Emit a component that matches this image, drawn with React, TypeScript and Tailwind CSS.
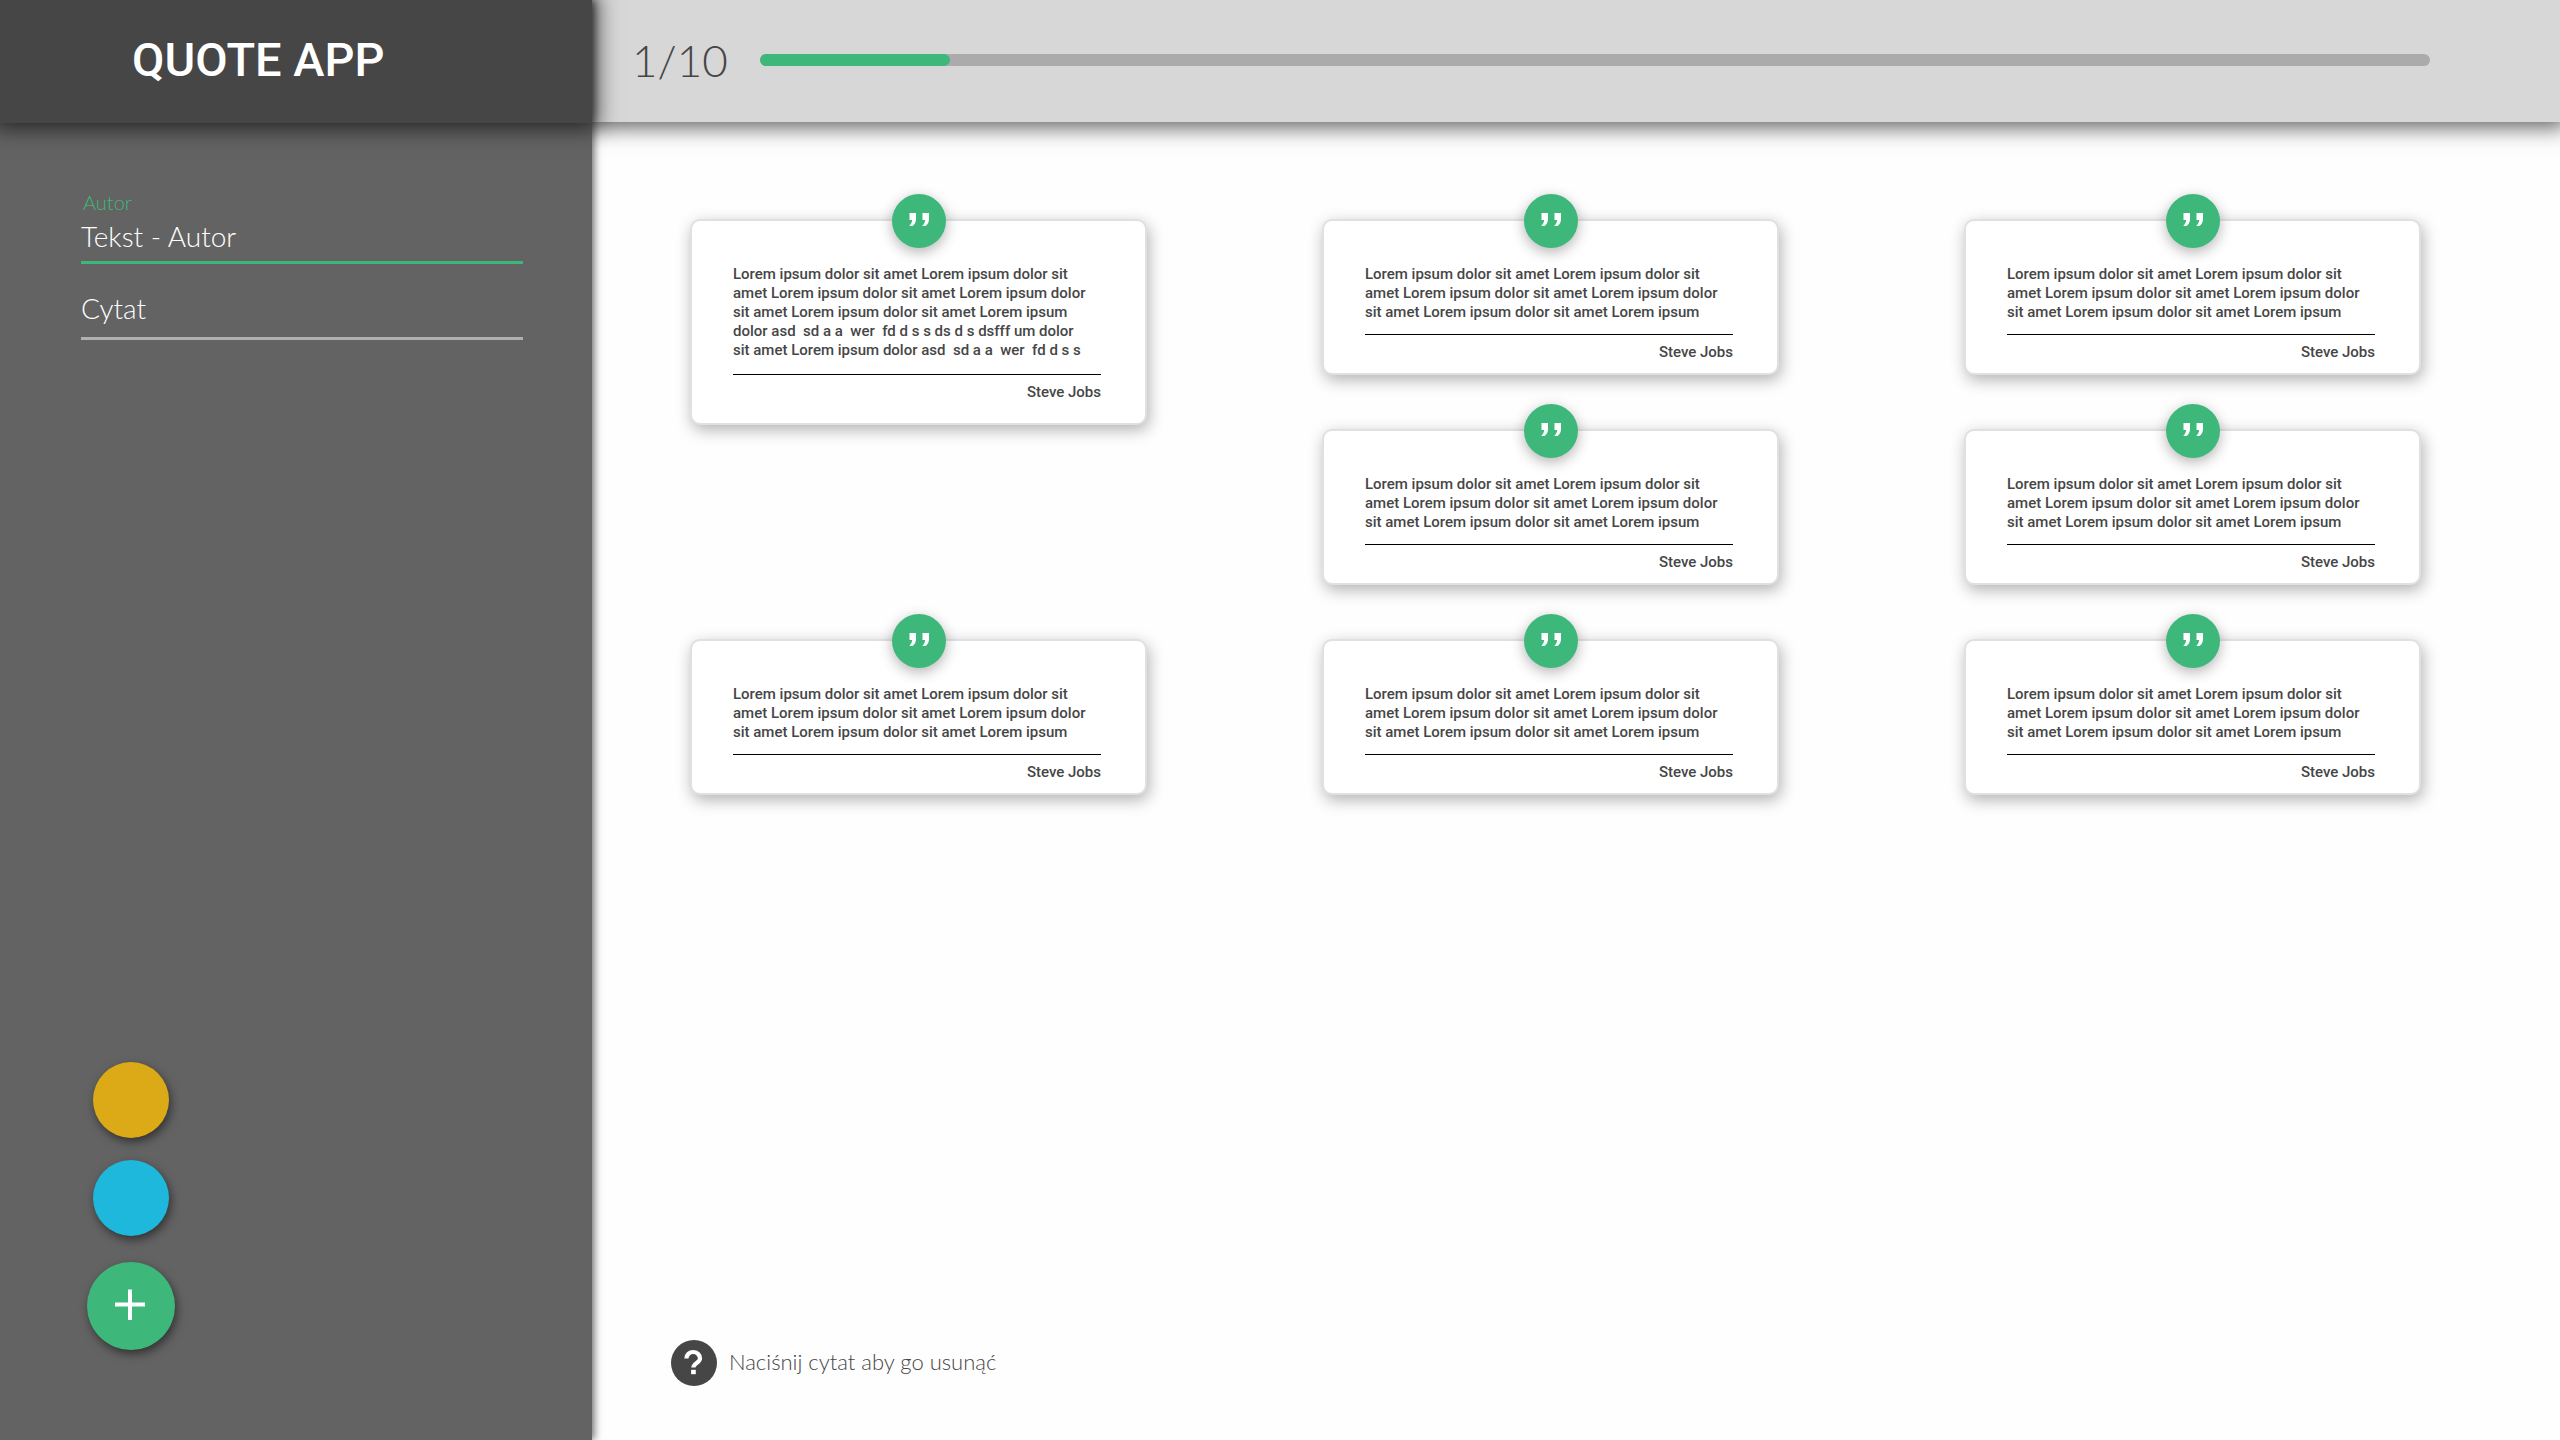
import { useState } from "react";

type Quote = { id: number; lines: string[]; author: string; tall?: boolean };

const SHORT_LINES = [
  "Lorem ipsum dolor sit amet Lorem ipsum dolor sit",
  "amet Lorem ipsum dolor sit amet Lorem ipsum dolor",
  "sit amet Lorem ipsum dolor sit amet Lorem ipsum",
];

const LONG_LINES = [
  ...SHORT_LINES,
  "dolor asd  sd a a  wer  fd d s s ds d s dsfff um dolor",
  "sit amet Lorem ipsum dolor asd  sd a a  wer  fd d s s",
];

const INITIAL_QUOTES: Quote[] = Array.from({ length: 8 }, (_, id) => ({
  id,
  lines: id === 0 ? LONG_LINES : SHORT_LINES,
  author: "Steve Jobs",
  tall: id === 0,
}));

function QuoteMark() {
  return (
    <span className="absolute left-1/2 -top-[27px] size-[54px] -translate-x-1/2 rounded-full bg-[#3db87a] shadow-[0_4px_14px_rgba(0,0,0,0.3)]">
      <svg viewBox="0 0 54 54" className="size-full fill-white" aria-hidden="true">
        <path d="M17.5 19h6.5v6.5c0 2.5-1.5 5-3.5 6.5h-3.3c1.6-1.6 2.8-3.6 3-6h-2.7z" />
        <path d="M30.5 19h6.5v6.5c0 2.5-1.5 5-3.5 6.5h-3.3c1.6-1.6 2.8-3.6 3-6h-2.7z" />
      </svg>
    </span>
  );
}

function QuoteCard({ quote, onRemove }: { quote: Quote; onRemove: () => void }) {
  return (
    <li className={quote.tall ? "row-span-2" : "row-span-1"}>
      <button
        type="button"
        onClick={onRemove}
        className={`relative flex w-full max-w-[457px] cursor-pointer flex-col rounded-[10px] border-2 border-[#e0e0e0] bg-white pt-11 pr-11 pl-[41px] text-left font-['Roboto',sans-serif] text-[15px] leading-[19px] font-medium text-[#464646] shadow-[2px_5px_16px_rgba(0,0,0,0.3)] ${
          quote.tall ? "min-h-[206px] pb-4" : "min-h-[156px] pb-[10px]"
        }`}
      >
        <QuoteMark />
        {quote.lines.map((line, i) => (
          <span key={i} className="block whitespace-pre">
            {line}
          </span>
        ))}
        <span
          className={`block w-full border-t border-black pt-2 text-right ${
            quote.tall ? "mt-[14px]" : "mt-3"
          }`}
        >
          {quote.author}
        </span>
      </button>
    </li>
  );
}

export default function App() {
  const [quotes, setQuotes] = useState(INITIAL_QUOTES);
  const [author, setAuthor] = useState("Tekst - Autor");
  const progress = 11.4;

  return (
    <div className="flex min-h-screen bg-[#fefefe] font-['Lato',sans-serif] font-light">
      <aside className="relative z-20 flex w-[592px] shrink-0 flex-col bg-[#636363] shadow-[2px_0_8px_rgba(0,0,0,0.6)]">
        <header className="flex h-[123px] items-center bg-[#464646] pb-[3px] pl-[132px] shadow-[0_0_20px_6px_rgba(0,0,0,0.6)]">
          <h1 className="font-['Roboto',sans-serif] text-[47px] font-medium text-white">QUOTE APP</h1>
        </header>

        <form className="flex flex-col pt-[67px] pr-[69px] pl-[81px]">
          <label htmlFor="author" className="px-0.5 text-xl leading-6 text-[#3db87a]">
            Autor
          </label>
          <input
            id="author"
            type="text"
            value={author}
            onChange={(e) => setAuthor(e.target.value)}
            className="h-[50px] border-b-3 border-[#3db87a] bg-transparent pb-[3px] text-[28px] text-white outline-none"
          />
          <input
            id="quote"
            type="text"
            aria-label="Cytat"
            placeholder="Cytat"
            className="mt-[22px] h-[54px] border-b-3 border-[#b0b0b0] bg-transparent pb-[7px] text-[28px] text-white outline-none placeholder:text-white"
          />
        </form>

        <div className="mt-auto ml-[87px] flex w-[88px] flex-col items-center gap-[22px] pb-[90px]">
          <button
            type="button"
            aria-label="Żółty"
            className="size-[76px] rounded-full bg-[#dcaa17] shadow-[2px_4px_10px_rgba(0,0,0,0.5)]"
          />
          <button
            type="button"
            aria-label="Niebieski"
            className="size-[76px] rounded-full bg-[#1eb8dc] shadow-[2px_4px_10px_rgba(0,0,0,0.5)]"
          />
          <button
            type="button"
            aria-label="Dodaj"
            className="mt-1 size-[88px] rounded-full bg-[#3db87a] shadow-[2px_4px_10px_rgba(0,0,0,0.5)]"
          >
            <svg viewBox="0 0 88 88" className="size-full stroke-white" aria-hidden="true">
              <path d="M28 42.5h30M43 27.5v30.5" strokeWidth="4" fill="none" />
            </svg>
          </button>
        </div>
      </aside>

      <div className="flex min-w-0 flex-1 flex-col">
        <header className="relative z-10 flex h-[122px] items-center gap-8 bg-[#d7d7d7] pr-[130px] pb-0.5 pl-10 shadow-[0_0_20px_6px_rgba(0,0,0,0.6)]">
          <span className="text-[44px] text-[#464646]">1/10</span>
          <div
            role="progressbar"
            aria-valuenow={1}
            aria-valuemin={0}
            aria-valuemax={10}
            className="h-3 flex-1 rounded-full bg-[#ababab]"
          >
            <div className="h-full rounded-full bg-[#3db87a]" style={{ width: `${progress}%` }} />
          </div>
        </header>

        <main className="flex flex-1 flex-col">
          <ul className="grid grid-cols-[632fr_642fr_457fr] items-start gap-y-[54px] pt-[97px] pr-[139px] pl-[98px]">
            {quotes.map((quote) => (
              <QuoteCard
                key={quote.id}
                quote={quote}
                onRemove={() => setQuotes(quotes.filter((q) => q.id !== quote.id))}
              />
            ))}
          </ul>

          <footer className="mt-auto flex items-center gap-3 pb-[54px] pl-[79px]">
            <svg viewBox="0 0 46 46" className="size-[46px]" aria-hidden="true">
              <circle cx="23" cy="23" r="23" fill="#464646" />
              <path
                d="M15.4 18.4a6.8 6.4 0 1 1 13.6 0c0 4.2-6.6 4.8-6.6 9.2"
                fill="none"
                stroke="#fff"
                strokeWidth="4.2"
              />
              <rect x="20.1" y="29.8" width="4.7" height="4.4" fill="#fff" />
            </svg>
            <p className="pb-1 text-[22px] text-[#464646]">Naciśnij cytat aby go usunąć</p>
          </footer>
        </main>
      </div>
    </div>
  );
}
